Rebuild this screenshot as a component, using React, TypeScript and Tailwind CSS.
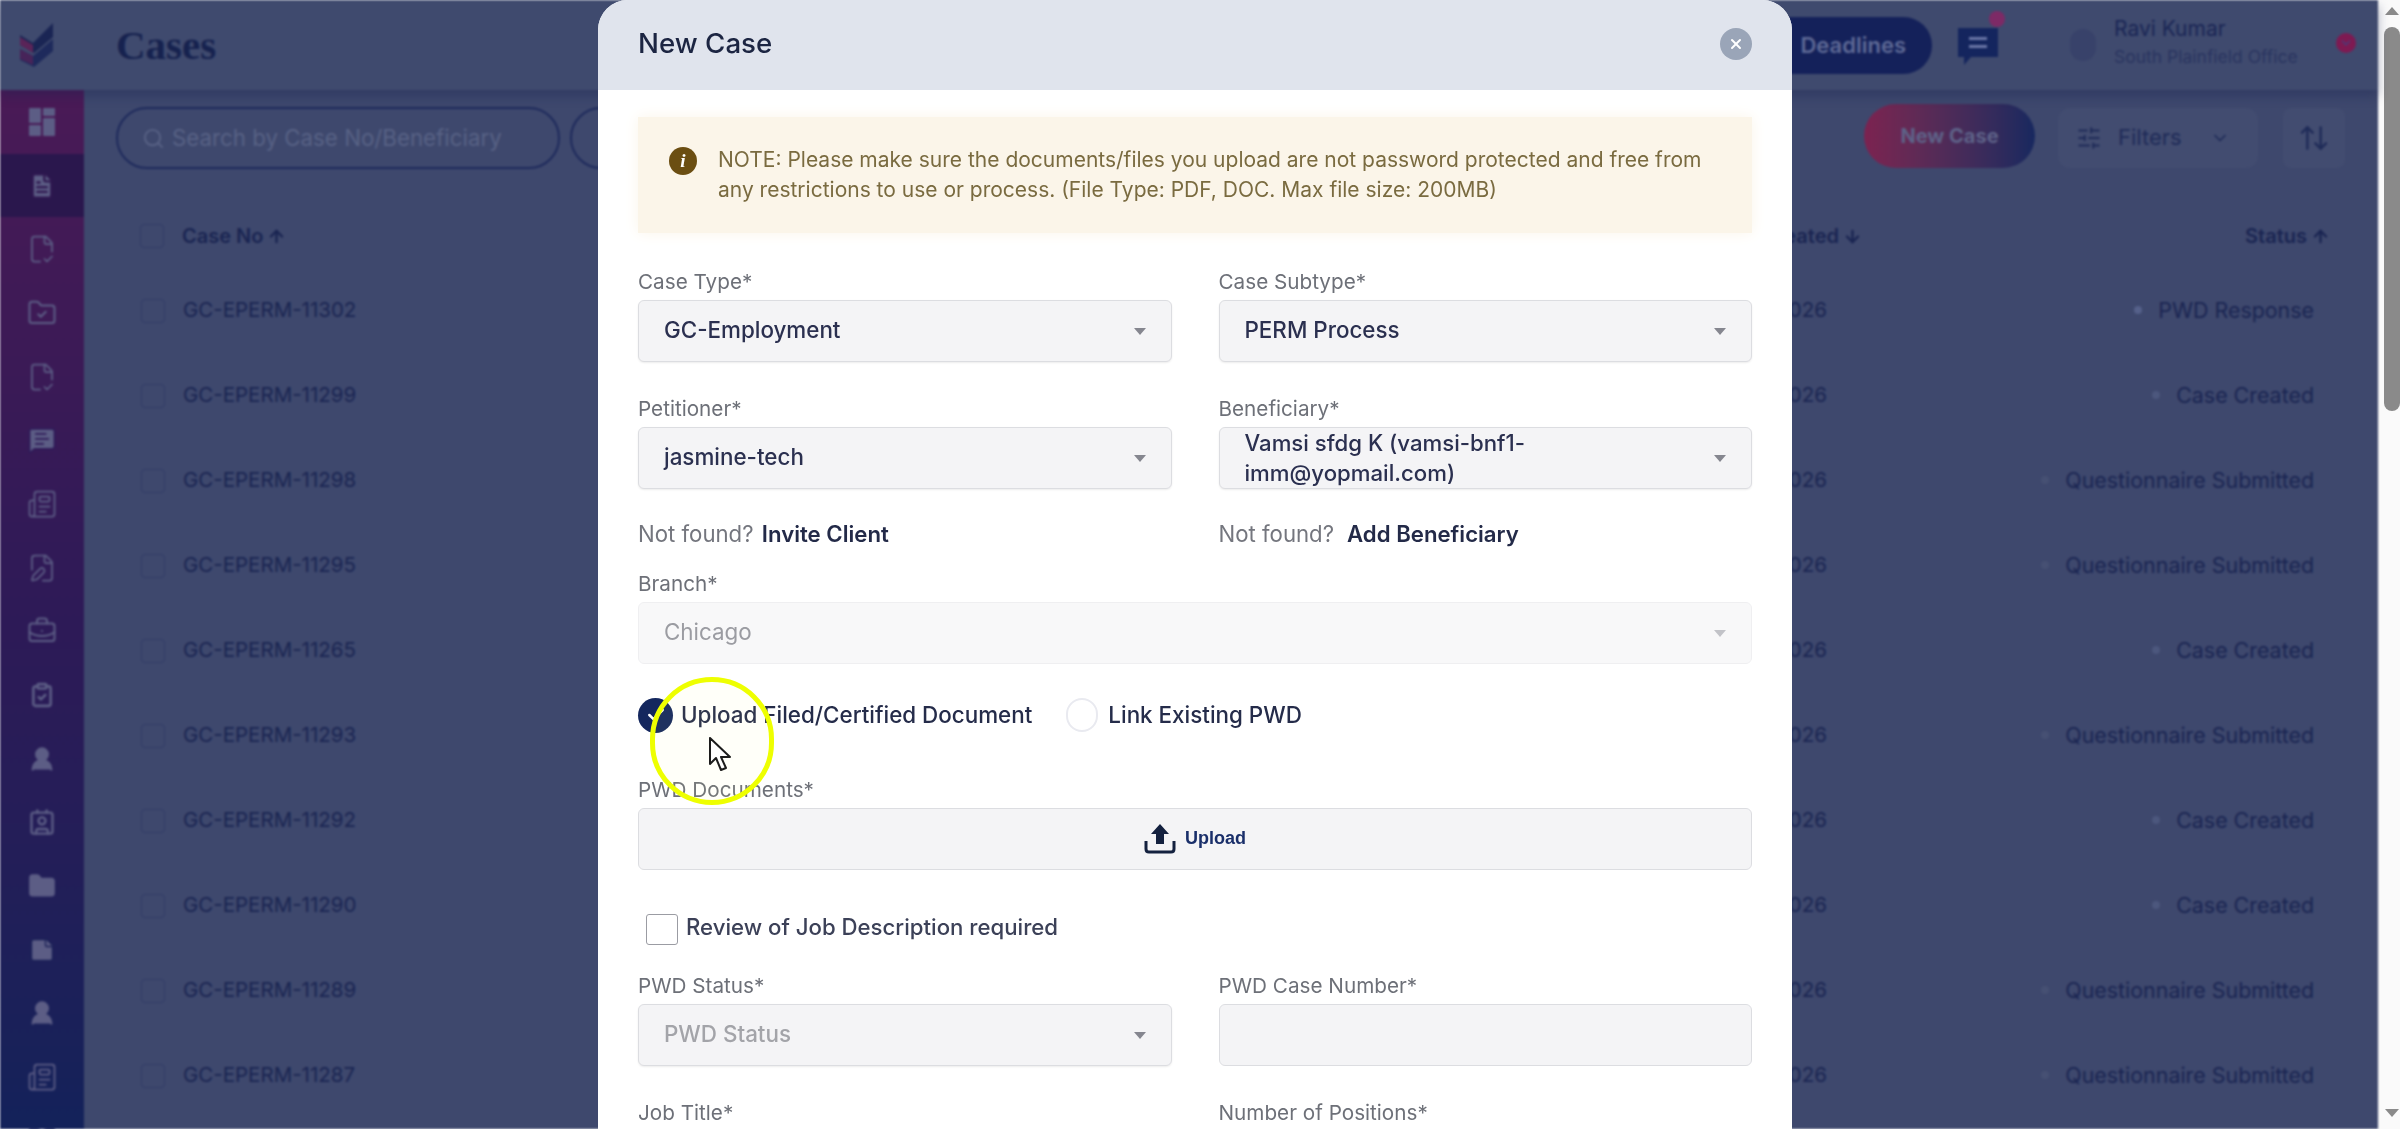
import React from "react";
import {
  FileText, FileCheck2, MessageSquareText, Newspaper, FilePen, BriefcaseBusiness, ClipboardCheck,
  UserRound, Contact, Folder, StickyNote, BookOpenText, Search, ArrowUp, ArrowDown, SlidersHorizontal,
  ChevronDown, X, ArrowUpDown, Check, FolderCheck,
} from "lucide-react";

const rows: [string, string, string, string][] = [
  ["GC-EPERM-11302", "01/29/2026", "PWD Response", "bg-[#55618a]"],
  ["GC-EPERM-11299", "01/28/2026", "Case Created", "bg-[#4c577d]"],
  ["GC-EPERM-11298", "01/28/2026", "Questionnaire Submitted", "bg-[#465073]"],
  ["GC-EPERM-11295", "01/27/2026", "Questionnaire Submitted", "bg-[#465073]"],
  ["GC-EPERM-11265", "01/27/2026", "Case Created", "bg-[#4c577d]"],
  ["GC-EPERM-11293", "01/27/2026", "Questionnaire Submitted", "bg-[#465073]"],
  ["GC-EPERM-11292", "01/26/2026", "Case Created", "bg-[#4c577d]"],
  ["GC-EPERM-11290", "01/26/2026", "Case Created", "bg-[#4c577d]"],
  ["GC-EPERM-11289", "01/26/2026", "Questionnaire Submitted", "bg-[#465073]"],
  ["GC-EPERM-11287", "01/26/2026", "Questionnaire Submitted", "bg-[#465073]"],
];

const GridIcon = () => (
  <svg viewBox="0 0 28 30" className="w-[28px] h-[30px]" fill="currentColor">
    <rect x="1" y="1" width="12" height="15" rx="1" />
    <rect x="15" y="1" width="12" height="8" rx="1" />
    <rect x="1" y="18" width="12" height="11" rx="1" />
    <rect x="15" y="11" width="12" height="18" rx="1" />
  </svg>
);

const sideIcons = [
  <GridIcon />,
  <FileText size={28} fill="currentColor" stroke="#2f1850" />,
  <FileCheck2 size={30} strokeWidth={1.4} />,
  <FolderCheck size={30} strokeWidth={1.6} />,
  <FileCheck2 size={30} strokeWidth={1.4} />,
  <MessageSquareText size={30} fill="currentColor" stroke="#2f1a58" strokeWidth={1.4} />,
  <Newspaper size={30} strokeWidth={1.4} />,
  <FilePen size={30} strokeWidth={1.4} />,
  <BriefcaseBusiness size={30} strokeWidth={1.6} />,
  <ClipboardCheck size={26} strokeWidth={2.4} />,
  <UserRound size={28} fill="currentColor" />,
  <Contact size={28} strokeWidth={2} />,
  <Folder size={28} fill="currentColor" />,
  <StickyNote size={28} fill="currentColor" stroke="#1c2258" strokeWidth={1.2} />,
  <UserRound size={28} fill="currentColor" />,
  <Newspaper size={30} strokeWidth={1.4} />,
  <BookOpenText size={30} strokeWidth={1.4} />,
];

const Logo = () => (
  <svg viewBox="0 0 34 44" className="w-[34px] h-[44px]">
    <path d="M33 0 L33 14 L14 30 L0 22 L0 12 L13 20 Z" fill="#1a2554" />
    <path d="M0 14 L13 22 L13 30 L0 22 Z" fill="#5a2458" />
    <path d="M33 16 L33 28 L14 44 L0 37 L0 26 L13 33 Z" fill="#1e2a5c" />
    <path d="M0 26 L13 33 L13 42 L0 36 Z" fill="#472459" />
  </svg>
);

const Arrow = ({ light }: { light?: boolean }) => (
  <svg viewBox="0 0 14 8" className="w-[12px] h-[7px] shrink-0">
    <path d="M0 0 L14 0 L7 8 Z" fill={light ? "#c2c3c8" : "#85868f"} />
  </svg>
);

const Label = ({ children, className = "" }: { children: React.ReactNode; className?: string }) => (
  <div className={`h-[24px] leading-[24px] text-[20.7px] text-[#6d7078] ${className}`}>{children}</div>
);

const Select = ({ value, muted, children }: { value?: string; muted?: boolean; children?: React.ReactNode }) => (
  <div className="mt-[6px] h-[62px] rounded-[6px] border border-[#dcdde1] bg-[#f4f4f6] shadow-[0_1px_2px_rgba(0,0,0,0.08)] flex items-center justify-between pl-[25px] pr-[25px]">
    {children ?? <span className={`-mt-[2px] text-[22.4px] font-medium ${muted ? "text-[#a3a4a9]" : "text-[#2b3050]"}`}>{value}</span>}
    <Arrow />
  </div>
);

export default function App() {
  return (
    <div className="relative w-[2400px] h-[1129px] overflow-hidden bg-white [font-family:Inter,'Liberation_Sans',sans-serif]">
      <div className="flex h-full">
        <div className="w-[2378px] h-full flex flex-col bg-[#3e486d] blur-[1px]">
          {/* top bar */}
          <header className="h-[90px] shrink-0 flex items-center bg-[#3f4a6e] shadow-[0_6px_10px_rgba(25,35,80,0.35)] z-10">
            <div className="w-[116px] pl-[20px] shrink-0 flex items-center"><Logo /></div>
            <h1 className="text-[41px] font-bold text-[#16224f] [font-family:'Liberation_Serif',serif] leading-none">Cases</h1>
            <div className="ml-auto flex items-center h-full">
              <div className="w-[300px] h-[57px] rounded-full bg-[#14215a] flex items-center justify-end pr-[26px] text-[22px] font-semibold text-[#5f6a96]">
                Deadlines
              </div>
              <div className="relative ml-[24px] mr-[70px] w-[44px] h-[44px]">
                <svg viewBox="0 0 44 44" className="w-[44px] h-[44px]">
                  <path d="M2 5 H42 V34 H15 L8 42 V34 H2 Z" fill="#14255e" />
                  <rect x="13" y="14" width="18" height="3" fill="#6a76a6" />
                  <rect x="13" y="22" width="18" height="3" fill="#6a76a6" />
                </svg>
                <span className="absolute -top-[12px] -right-[5px] w-[16px] h-[16px] rounded-full bg-[#7d2a66]" />
              </div>
              <div className="w-[26px] h-[32px] rounded-full bg-[#38426a] mr-[18px]" />
              <div className="w-[200px] -mt-[4px]">
                <div className="text-[21px] leading-[28px] text-[#1a2655]">Ravi Kumar</div>
                <div className="text-[17.5px] leading-[28px] text-[#2a3560]">South Plainfield Office</div>
              </div>
              <div className="w-[20px] h-[20px] rounded-full bg-[#7e1a52] flex items-center justify-center -mt-[4px] mr-[22px] ml-[22px]">
                <ChevronDown size={14} color="#4c3a78" strokeWidth={3} />
              </div>
            </div>
          </header>

          <div className="flex flex-1 min-h-0">
            {/* sidebar */}
            <aside className="w-[84px] shrink-0 flex flex-col items-center bg-gradient-to-b from-[#4a1a56] via-[#2e1a57] to-[#13225a] text-[#5c5d85]">
              {sideIcons.map((icon, i) => (
                <div key={i} className={`w-full h-[63.7px] shrink-0 flex items-center justify-center ${i === 1 ? "bg-[#2a174d]" : ""}`}>
                  {icon}
                </div>
              ))}
            </aside>

            <main className="flex-1 min-w-0 pl-[32px] pr-[33px]">
              {/* toolbar */}
              <div className="mt-[14px] flex items-center h-[64px]">
                <div className="w-[444px] h-[62px] mt-[4px] rounded-full border-2 border-[#1e2a5c] flex items-center pl-[24px] gap-[7px] text-[#586285]">
                  <Search size={23} />
                  <span className="text-[22.3px] whitespace-nowrap">Search by Case No/Beneficiary</span>
                </div>
                <div className="ml-[10px] w-[200px] h-[62px] mt-[4px] rounded-full border-2 border-[#1e2a5c]" />
                <div className="ml-auto w-[171px] h-[64px] rounded-full bg-gradient-to-r from-[#7c2250] to-[#17285f] flex items-center justify-center text-[20px] font-bold text-[#5e6288]">
                  New Case
                </div>
                <div className="ml-[23px] w-[200px] h-[60px] mt-[4px] rounded-[12px] bg-[#424c70] flex items-center pl-[18px] text-[#1f2b58]">
                  <SlidersHorizontal size={26} strokeWidth={1.8} />
                  <span className="ml-[16px] -mt-[2px] text-[22px]">Filters</span>
                  <ChevronDown size={20} className="ml-[28px]" />
                </div>
                <div className="ml-[25px] w-[62px] h-[60px] mt-[4px] rounded-[8px] bg-[#424c70] flex items-center justify-center text-[#1f2b58]">
                  <ArrowUpDown size={32} strokeWidth={1.8} />
                </div>
              </div>

              {/* table head */}
              <div className="mt-[36px] h-[64px] flex items-center pl-[24px] pr-[15px] text-[20px] font-semibold text-[#1a2552]">
                <span className="w-[24px] h-[24px] rounded-[4px] border border-[#323d66] shrink-0" />
                <span className="ml-[18px] flex-1 flex items-center gap-[4px]">Case No <ArrowUp size={19} strokeWidth={3} /></span>
                <span className="mr-[168px] flex items-center gap-[4px]">Date Created <ArrowDown size={19} strokeWidth={3} /></span>
                <span className="w-[300px] flex items-center justify-end gap-[4px]">Status <ArrowUp size={19} strokeWidth={3} /></span>
              </div>

              {/* rows */}
              {rows.map(([no, date, status, dot]) => (
                <div key={no} className="h-[85px] flex items-center pl-[25px] pr-[31px] text-[21.4px] text-[#1a2552]">
                  <span className="w-[24px] h-[24px] rounded-[4px] border border-[#323d66] shrink-0" />
                  <span className="ml-[18px] flex-1 text-[20.5px]">{no}</span>
                  <span className="mr-[187px] text-[20.5px]">{date}</span>
                  <span className="w-[300px] flex items-center justify-end gap-[16px]">
                    <span className={`w-[8px] h-[8px] rounded-full ${dot}`} />
                    {status}
                  </span>
                </div>
              ))}
            </main>
          </div>
        </div>

        {/* page scrollbar */}
        <div className="w-[22px] h-full bg-[#fafafa] flex flex-col items-center pl-[6px]">
          <svg viewBox="0 0 14 8" className="w-[14px] h-[8px] mt-[7px]"><path d="M7 0 L14 8 L0 8 Z" fill="#8a8a8a" /></svg>
          <div className="w-[16px] h-[384px] mt-[12px] rounded-[8px] bg-[#8a8a8a]" />
          <svg viewBox="0 0 14 8" className="w-[14px] h-[8px] mt-auto mb-[12px]"><path d="M0 0 L14 0 L7 8 Z" fill="#8a8a8a" /></svg>
        </div>
      </div>

      {/* modal */}
      <div className="absolute left-[598px] top-0 w-[1194px] h-[1129px] rounded-t-[30px] overflow-hidden bg-white blur-[0.4px]">
        <div className="h-[90px] bg-[#e0e4ed] flex items-center justify-between pl-[40px] pr-[40px] pb-[3px]">
          <h2 className="text-[27.7px] font-medium text-[#1c2542]">New Case</h2>
          <div className="w-[32px] h-[32px] rounded-full bg-[#9aa5b8] flex items-center justify-center">
            <X size={16} color="#ffffff" strokeWidth={3} />
          </div>
        </div>

        <div className="px-[40px]">
          <div className="mt-[27px] h-[116px] bg-[#fbf5e9] shadow-[0_0_14px_#fbf5e9] flex items-center pl-[31px] pr-[20px] gap-[21px]">
            <div className="w-[28px] h-[28px] rounded-full bg-[#6b4e12] flex items-center justify-center shrink-0 -mt-[28px]">
              <span className="text-white text-[19px] font-bold italic [font-family:'Liberation_Serif',serif]">i</span>
            </div>
            <p className="text-[21px] leading-[30px] text-[#7a6b40]">
              NOTE: Please make sure the documents/files you upload are not password protected and free from any restrictions to use or process. (File Type: PDF, DOC. Max file size: 200MB)
            </p>
          </div>

          <div className="mt-[37px] grid grid-cols-2 gap-x-[47px]">
            <div>
              <Label>Case Type*</Label>
              <Select value="GC-Employment" />
            </div>
            <div>
              <Label>Case Subtype*</Label>
              <Select value="PERM Process" />
            </div>
            <div className="mt-[35px]">
              <Label>Petitioner*</Label>
              <Select value="jasmine-tech" />
            </div>
            <div className="mt-[35px]">
              <Label>Beneficiary*</Label>
              <Select>
                <span className="w-[340px] text-[22.2px] leading-[30px] font-medium text-[#2b3050]">
                  Vamsi sfdg K (vamsi-bnf1-imm@yopmail.com)
                </span>
              </Select>
            </div>
            <div className="mt-[31px] h-[28px] leading-[28px] text-[22.2px]">
              <span className="text-[#74767e]">Not found? </span>
              <span className="font-semibold text-[#232a48] ml-[2px]">Invite Client</span>
            </div>
            <div className="mt-[31px] h-[28px] leading-[28px] text-[22.2px]">
              <span className="text-[#74767e]">Not found?</span>
              <span className="font-semibold text-[#232a48] ml-[13px]">Add Beneficiary</span>
            </div>
          </div>

          <div className="mt-[24px]">
            <Label>Branch*</Label>
            <div className="mt-[6px] h-[62px] rounded-[6px] border border-[#efeff1] bg-[#f8f8f9] flex items-center justify-between pl-[25px] pr-[25px]">
              <span className="-mt-[2px] text-[22.4px] text-[#9b9ca2]">Chicago</span>
              <Arrow light />
            </div>
          </div>

          <div className="mt-[33px] h-[36px] flex items-center text-[22.4px] font-medium text-[#252c4a]">
            <span className="w-[35px] h-[35px] rounded-full bg-[#14275e] flex items-center justify-center shrink-0">
              <Check size={20} color="#ffffff" strokeWidth={3} />
            </span>
            <span className="ml-[8px]">Upload Filed/Certified Document</span>
            <span className="ml-[34px] w-[32px] h-[34px] rounded-full bg-white border-2 border-[#e9eaf0] shrink-0" />
            <span className="ml-[10px]">Link Existing PWD</span>
          </div>

          <div className="mt-[45px]">
            <Label>PWD Documents*</Label>
            <div className="mt-[6px] h-[62px] rounded-[6px] border border-[#dcdde1] bg-[#f4f4f6] flex items-center justify-center gap-[9px]">
              <svg viewBox="0 0 32 32" className="w-[32px] h-[32px] -mt-[2px]">
                <path d="M16 2 L25 12 H20 V22 H12 V12 H7 Z" fill="#14213f" />
                <path d="M2 19 V27 Q2 30 5 30 H27 Q30 30 30 27 V19" fill="none" stroke="#14213f" strokeWidth="3" />
              </svg>
              <span className="-mt-[2px] text-[18px] font-bold text-[#1a2f6a] [font-family:'Liberation_Sans',sans-serif]">Upload</span>
            </div>
          </div>

          <div className="mt-[44px] h-[31px] pl-[8px] flex items-center text-[22.2px] font-medium text-[#3c4158]">
            <span className="w-[32px] h-[31px] rounded-[3px] border border-[#9b9ca3] bg-white shrink-0" />
            <span className="ml-[8px] -mt-[5px]">Review of Job Description required</span>
          </div>

          <div className="mt-[29px] grid grid-cols-2 gap-x-[47px]">
            <div>
              <Label>PWD Status*</Label>
              <Select value="PWD Status" muted />
            </div>
            <div>
              <Label>PWD Case Number*</Label>
              <div className="mt-[6px] h-[62px] rounded-[6px] border border-[#dcdde1] bg-[#f4f4f6]" />
            </div>
            <div className="mt-[35px]">
              <Label>Job Title*</Label>
            </div>
            <div className="mt-[35px]">
              <Label>Number of Positions*</Label>
            </div>
          </div>
        </div>
      </div>

      {/* cursor highlight */}
      <div className="absolute left-[650px] top-[677px] w-[124px] h-[128px] rounded-full border-[5px] border-[#eeff00] bg-[#ffff80]/5 blur-[0.5px]" />
      <svg viewBox="0 0 24 36" className="absolute left-[708px] top-[737px] w-[24px] h-[36px]">
        <path d="M2 1 V27 L8 21 L13 33 L18 31 L13 20 L22 20 Z" fill="#ffffff" stroke="#1c1c1c" strokeWidth="2" strokeLinejoin="round" />
      </svg>
    </div>
  );
}
